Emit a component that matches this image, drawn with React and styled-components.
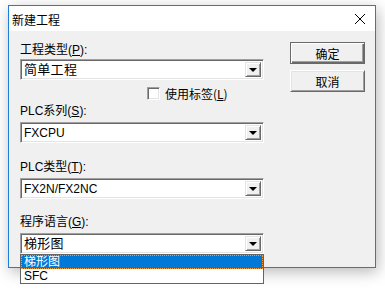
import React from 'react'
import styled, { createGlobalStyle } from 'styled-components'

const Global = createGlobalStyle`
  html, body {
    margin: 0;
    background: #ffffff;
  }
  body {
    font-family: "Liberation Sans", "Noto Sans CJK SC", sans-serif;
    font-size: 12px;
    color: #000;
  }
`

const Page = styled.div`
  width: 385px;
  height: 291px;
  overflow: hidden;
  padding: 5px 0 0 8px;
  box-sizing: border-box;
`

const Window = styled.div`
  position: relative;
  width: 368px;
  height: 263px;
  box-sizing: border-box;
  border: 1px solid #1c7ed6;
  background: #f0f0f0;
  box-shadow: 2px 4px 14px rgba(0, 0, 0, 0.28);
  display: flex;
  flex-direction: column;
`

const TitleBar = styled.div`
  height: 25px;
  background: #ffffff;
  display: flex;
  align-items: center;
  justify-content: space-between;
  padding: 0 9px 0 3px;
`

const Title = styled.span`
  font-family: "Noto Sans CJK SC", sans-serif;
  font-size: 12px;
  line-height: 16px;
  margin-top: 2px;
`

const Close = styled.div`
  width: 12px;
  height: 12px;
  display: flex;
`

const Body = styled.div`
  flex: 1;
  display: flex;
  padding: 11px 10px 0 11px;
`

const Form = styled.div`
  width: 244px;
  display: flex;
  flex-direction: column;
`

const Label = styled.div`
  font-family: "Liberation Sans", "Noto Sans CJK SC", sans-serif;
  font-size: 12px;
  line-height: 16px;
  height: 16px;
  margin-top: ${p => p.$top || 0}px;
  margin-bottom: ${p => p.$gap ?? 3}px;

  u {
    text-decoration: underline;
    text-underline-offset: 1px;
  }
`

const Combo = styled.div`
  position: relative;
  height: 21px;
  box-sizing: border-box;
  background: #ffffff;
  border-top: 1px solid #a0a0a0;
  border-left: 1px solid #a0a0a0;
  border-right: 1px solid #ffffff;
  border-bottom: 1px solid #ffffff;
  box-shadow: inset 1px 1px 0 #696969, inset -1px -1px 0 #e3e3e3;
  display: flex;
  align-items: center;
  padding: 0 2px 0 3px;
`

const ComboText = styled.span`
  flex: 1;
  font-family: "Liberation Sans", "Noto Sans CJK SC", sans-serif;
  font-size: ${p => (p.$cjk ? 13 : 12)}px;
  letter-spacing: ${p => (p.$cjk ? 0.3 : 0)}px;
  line-height: 16px;
`

const Arrow = styled.div`
  width: 16px;
  height: 15px;
  box-sizing: border-box;
  background: #f0f0f0;
  border-top: 1px solid #e3e3e3;
  border-left: 1px solid #e3e3e3;
  border-right: 1px solid #696969;
  border-bottom: 1px solid #696969;
  box-shadow: inset 1px 1px 0 #ffffff, inset -1px -1px 0 #a0a0a0;
  display: flex;
  align-items: center;
  justify-content: center;

  &::after {
    content: '';
    border-left: 4px solid transparent;
    border-right: 4px solid transparent;
    border-top: 4px solid #000;
    margin-top: 1px;
  }
`

const CheckRow = styled.div`
  display: flex;
  align-items: center;
  height: 13px;
  margin: 7px 0 0 127px;
  gap: 5px;
  font-family: "Noto Sans CJK SC", sans-serif;
  font-size: 12px;

  u {
    text-decoration: underline;
  }
`

const Box = styled.div`
  width: 13px;
  height: 13px;
  box-sizing: border-box;
  background: #fff;
  border-top: 1px solid #a0a0a0;
  border-left: 1px solid #a0a0a0;
  border-right: 1px solid #fff;
  border-bottom: 1px solid #fff;
  box-shadow: inset 1px 1px 0 #696969, inset -1px -1px 0 #e3e3e3;
`

const List = styled.div`
  position: absolute;
  left: -1px;
  right: -1px;
  top: 20px;
  border: 1px solid #646464;
  background: #ffffff;
  z-index: 2;
`

const Item = styled.div`
  height: 14px;
  line-height: 12px;
  overflow: hidden;
  box-sizing: border-box;
  padding-left: 2px;
  font-family: "Liberation Sans", "Noto Sans CJK SC", sans-serif;
  font-size: 12px;
  background: ${p => (p.$active ? '#0078d7' : '#fff')};
  color: ${p => (p.$active ? '#fff' : '#000')};
  border: 1px dotted ${p => (p.$active ? '#f59a3c' : 'transparent')};
  display: flex;
  align-items: center;
`

const Buttons = styled.div`
  margin-left: 26px;
  display: flex;
  flex-direction: column;
  gap: 6px;
`

const Button = styled.div`
  width: 75px;
  height: 22px;
  box-sizing: border-box;
  display: flex;
  align-items: center;
  justify-content: center;
  font-family: "Noto Sans CJK SC", sans-serif;
  font-size: 12px;
  background: #f0f0f0;
  border-top: 1px solid ${p => (p.$default ? '#696969' : '#ffffff')};
  border-left: 1px solid ${p => (p.$default ? '#696969' : '#ffffff')};
  border-right: 1px solid #696969;
  border-bottom: 1px solid #696969;
  box-shadow: ${p =>
    p.$default
      ? 'inset 1px 1px 0 #ffffff, inset -1px -1px 0 #696969, inset -2px -2px 0 #a0a0a0'
      : 'inset 1px 1px 0 #e3e3e3, inset -1px -1px 0 #a0a0a0'};
`

const Field = ({ label, keyChar, value, cjk, top, gap, children }) => (
  <>
    <Label $top={top} $gap={gap}>
      {label}(<u>{keyChar}</u>):
    </Label>
    <Combo>
      <ComboText $cjk={cjk}>{value}</ComboText>
      <Arrow />
      {children}
    </Combo>
  </>
)

export default function App() {
  return (
    <Page>
      <Global />
      <Window>
        <TitleBar>
          <Title>新建工程</Title>
          <Close>
            <svg width="12" height="12" viewBox="0 0 12 12">
              <path d="M1 1 L11 11 M11 1 L1 11" stroke="#000" strokeWidth="1" />
            </svg>
          </Close>
        </TitleBar>
        <Body>
          <Form>
            <Field label="工程类型" keyChar="P" value="简单工程" cjk gap={1} />
            <CheckRow>
              <Box />
              <span>
                使用标签(<u>L</u>)
              </span>
            </CheckRow>
            <Field label="PLC系列" keyChar="S" value="FXCPU" top={3} />
            <Field label="PLC类型" keyChar="T" value="FX2N/FX2NC" top={16} />
            <Field label="程序语言" keyChar="G" value="梯形图" cjk top={15} gap={3}>
              <List>
                <Item $active>梯形图</Item>
                <Item>SFC</Item>
              </List>
            </Field>
          </Form>
          <Buttons>
            <Button $default>确定</Button>
            <Button>取消</Button>
          </Buttons>
        </Body>
      </Window>
    </Page>
  )
}
